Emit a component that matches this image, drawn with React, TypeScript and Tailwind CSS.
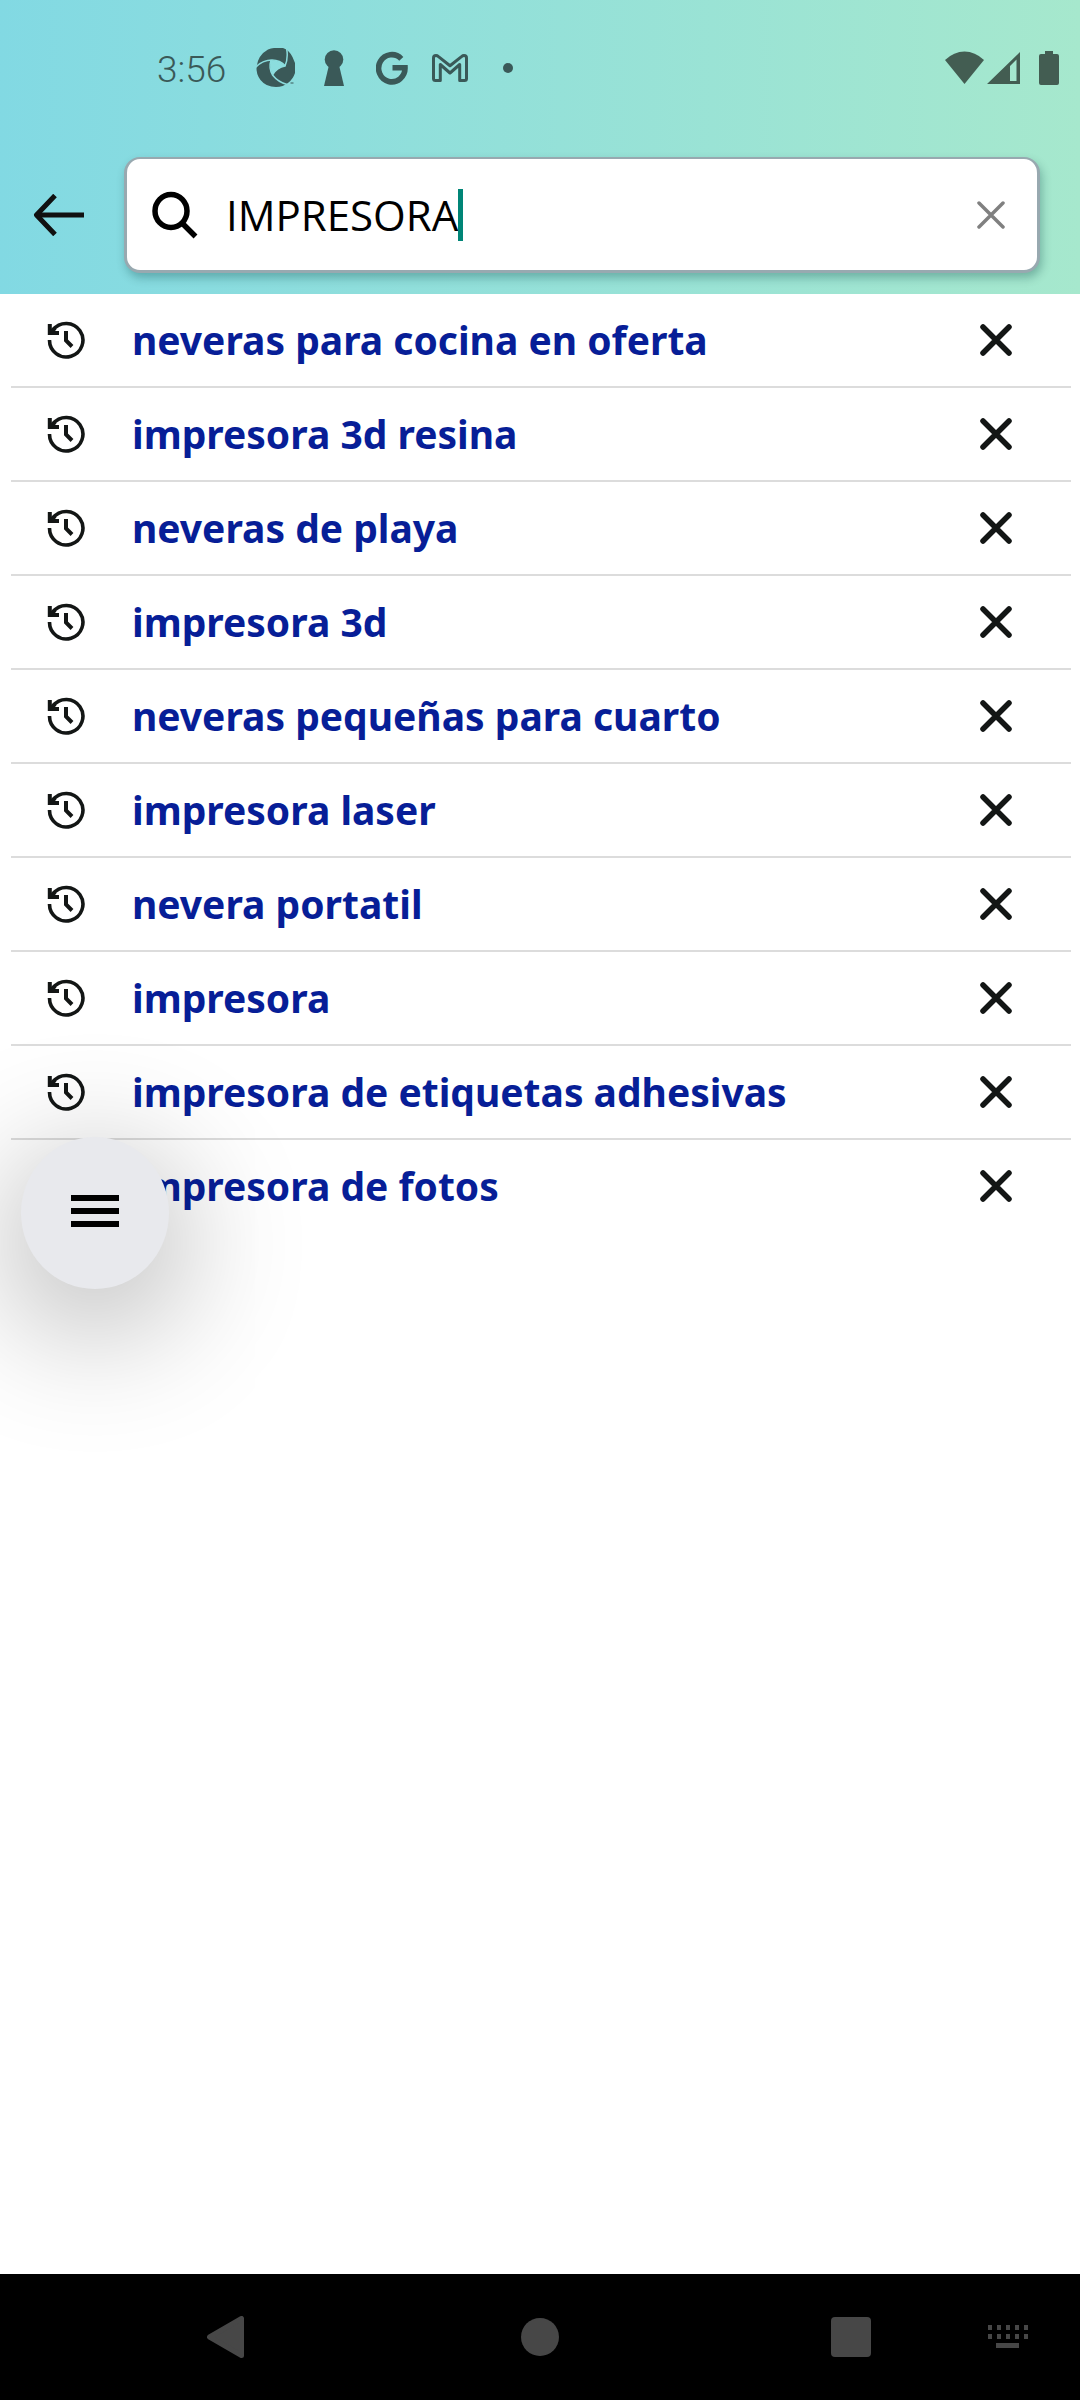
import type { ReactNode } from "react";

const suggestions = [
  "neveras para cocina en oferta",
  "impresora 3d resina",
  "neveras de playa",
  "impresora 3d",
  "neveras pequeñas para cuarto",
  "impresora laser",
  "nevera portatil",
  "impresora",
  "impresora de etiquetas adhesivas",
  "impresora de fotos",
];

function StatusCell({ children }: { children: ReactNode }) {
  return <span className="flex w-[58px] items-center justify-center">{children}</span>;
}

function StatusBar() {
  return (
    <div className="flex h-[136px] items-center pr-[21px] pl-[157px] text-[#3a5958]">
      <span className="w-[90px] pt-[2px] font-['Roboto',sans-serif] text-[37px] leading-none font-[350]">3:56</span>
      <StatusCell>
        <svg width="40" height="40" viewBox="0 0 40 40" aria-hidden="true">
          <mask id="aperture">
            <rect width="40" height="40" fill="white" />
            <g fill="none" stroke="black" strokeWidth="1.5">
              <path d="M-1 20Q6 12 16 12Q24 12 29.500 18" />
              <path d="M30.500 0Q32.500 10 29 18Q21 19 16.500 27" />
              <path d="M31 36.500Q22 34 16.500 27Q12.500 20 15 12" />
            </g>
            <path d="M15 12Q24 12 29 18Q21 20 16.500 27Q13 19 15 12Z" fill="black" />
          </mask>
          <path
            mask="url(#aperture)"
            fill="currentColor"
            d="M12 1.500Q15 0 18 0H27Q33 2 36.500 9L39 15V25Q37 31 32.500 34.500Q27 39 20 39Q10 39 4.500 32Q0 26 .5 19Q2 7 12 1.500Z"
          />
          <path d="M34.500 35H37.500" stroke="currentColor" strokeWidth="1" />
        </svg>
      </StatusCell>
      <StatusCell>
        <svg width="20" height="36" viewBox="0 0 20 36" fill="currentColor" aria-hidden="true">
          <circle cx="10" cy="9.500" r="9.300" />
          <path d="M5 15H15L20 36H0Z" />
        </svg>
      </StatusCell>
      <StatusCell>
        <svg width="32" height="34" viewBox="0 0 32 34" aria-hidden="true">
          <path
            d="M25.300 7.800A13.200 13.600 0 1 0 29 16.800H16.500"
            fill="none"
            stroke="currentColor"
            strokeWidth="5.600"
          />
        </svg>
      </StatusCell>
      <StatusCell>
        <svg width="36" height="28" viewBox="0 0 36 28" aria-hidden="true">
          <path
            d="M1.500 4Q1.500 1.500 4 1.500Q5.200 1.500 6.500 2.600L18 11.700L29.500 2.600Q30.800 1.500 32 1.500Q34.500 1.500 34.500 4V24.500Q34.500 26.500 32.500 26.500H27.700V10.500L18 19L8.300 10.500V26.500H3.500Q1.500 26.500 1.500 24.500Z"
            fill="none"
            stroke="currentColor"
            strokeWidth="3"
            strokeLinejoin="round"
          />
        </svg>
      </StatusCell>
      <StatusCell>
        <span className="size-[10px] rounded-full bg-[#3a5958]" />
      </StatusCell>
      <div className="ml-auto flex items-center text-[#435d52]">
        <svg width="39" height="34" viewBox="0 0 39 34" fill="currentColor" aria-hidden="true">
          <path d="M0 9Q9 .5 19.500 .5Q30 .5 39 9L19.500 33Z" />
        </svg>
        <svg className="ml-[3px]" width="33" height="34" viewBox="0 0 33 34" aria-hidden="true">
          <path fillRule="evenodd" fill="currentColor" d="M33 1V33H0ZM29.500 8.500L23 15V30H29.500Z" />
        </svg>
        <svg className="ml-[19px]" width="20" height="34" viewBox="0 0 20 34" fill="currentColor" aria-hidden="true">
          <path d="M6 0H14V3H18Q20 3 20 5V32Q20 34 18 34H2Q0 34 0 32V5Q0 3 2 3H6Z" />
        </svg>
      </div>
    </div>
  );
}

function SearchBar() {
  return (
    <div className="flex items-center pt-[21px] pr-[40px] pb-[21px] pl-[33px]">
      <button type="button" aria-label="Atrás" className="mr-[39px] shrink-0">
        <svg width="52" height="42" viewBox="0 0 52 42" fill="none" stroke="#111" strokeWidth="5" aria-hidden="true">
          <path d="M4 21H51" />
          <path d="M22 1.500L3.500 21L22 40.500" strokeLinejoin="round" />
        </svg>
      </button>
      <form
        className="flex h-[116px] flex-1 items-center rounded-[16px] border-[3px] border-t-2 border-[#98a9b0] bg-white pr-[32px] pl-[25px] shadow-[2px_5px_10px_rgba(0,60,60,0.3)]"
        onSubmit={(e) => e.preventDefault()}
      >
        <svg width="46" height="48" viewBox="0 0 46 48" fill="none" stroke="#000" aria-hidden="true">
          <ellipse cx="19" cy="20" rx="16" ry="16.500" strokeWidth="5.500" />
          <path d="M30 32L43.500 45.500" strokeWidth="5.500" />
        </svg>
        <input
          type="text"
          aria-label="Buscar"
          defaultValue="IMPRESORA"
          className="ml-[28px] field-sizing-content bg-transparent font-['Open_Sans',sans-serif] text-[42px] leading-[52px] text-black caret-[#008577] outline-none"
        />
        <span className="h-[52px] w-[5px] bg-[#008577]" />
        <button type="button" aria-label="Borrar" className="ml-auto">
          <svg width="28" height="28" viewBox="0 0 28 28" stroke="#808080" strokeWidth="3.500" strokeLinecap="round" aria-hidden="true">
            <path d="M2 2L26 26M26 2L2 26" />
          </svg>
        </button>
      </form>
    </div>
  );
}

function HistoryIcon() {
  return (
    <svg width="38" height="38" viewBox="0 0 38 38" fill="none" stroke="#131615" aria-hidden="true">
      <path d="M2.500 19A16.700 16.700 0 1 0 6 9" strokeWidth="3.600" />
      <path d="M2.800 3V12H12" strokeWidth="4" />
      <path d="M3 12L8 7" strokeWidth="4" />
      <path d="M19 10V19.500L25 25.500" strokeWidth="4" />
    </svg>
  );
}

function SuggestionRow({ text }: { text: string }) {
  return (
    <li className="mr-[9px] ml-[11px] flex h-[94px] items-center border-b-2 border-[#dcdcdc] pr-[59px] pl-[36px] last:border-transparent">
      <HistoryIcon />
      <button
        type="button"
        className="ml-[47px] flex-1 text-left font-['Noto_Sans',sans-serif] text-[39px] leading-[56px] font-bold text-[#071e97]"
      >
        {text}
      </button>
      <button type="button" aria-label={`Eliminar ${text}`}>
        <svg width="32" height="32" viewBox="0 0 32 32" stroke="#131615" strokeWidth="5.500" strokeLinecap="round" aria-hidden="true">
          <path d="M3 3L29 29M29 3L3 29" />
        </svg>
      </button>
    </li>
  );
}

function NavigationBar() {
  return (
    <nav className="flex h-[126px] items-center bg-black pr-[52px] pl-[207px] text-[#474747]">
      <button type="button" aria-label="Volver" className="pr-[4px]">
        <svg width="38" height="42" viewBox="0 0 38 42" fill="currentColor" stroke="currentColor" strokeWidth="5" strokeLinejoin="round" aria-hidden="true">
          <path d="M2.500 21L34.500 2.500V39.500Z" />
        </svg>
      </button>
      <button type="button" aria-label="Inicio" className="mx-auto size-[38px] rounded-full bg-[#474747]" />
      <button type="button" aria-label="Recientes" className="size-[40px] rounded-[4px] bg-[#474747]" />
      <button type="button" aria-label="Teclado" className="ml-[117px]">
        <svg width="40" height="24" viewBox="0 0 40 24" fill="currentColor" aria-hidden="true">
          {[0, 9, 18, 27, 36].map((x) => (
            <path key={x} d={`M${x} 0h4v5h-4zM${x} 9h4v5h-4z`} />
          ))}
          <path d="M8 18H31V23H8Z" />
        </svg>
      </button>
    </nav>
  );
}

export default function App() {
  return (
    <div className="relative flex min-h-screen flex-col overflow-hidden bg-white">
      <header className="bg-linear-to-r from-[#82d9e3] to-[#a6e8cd]">
        <StatusBar />
        <SearchBar />
      </header>
      <main className="flex-1">
        <ul>
          {suggestions.map((text) => (
            <SuggestionRow key={text} text={text} />
          ))}
        </ul>
      </main>
      <NavigationBar />
      <button
        type="button"
        aria-label="Menú"
        className="absolute top-[1137px] left-[21px] flex h-[152px] w-[148px] flex-col items-center justify-center gap-[7px] rounded-[50%] bg-[#e8e9ed] pb-[4px] shadow-[0_30px_130px_10px_rgba(0,0,0,0.3)]"
      >
        <span className="h-[6px] w-[48px] bg-black" />
        <span className="h-[6px] w-[48px] bg-black" />
        <span className="h-[6px] w-[48px] bg-black" />
      </button>
    </div>
  );
}
